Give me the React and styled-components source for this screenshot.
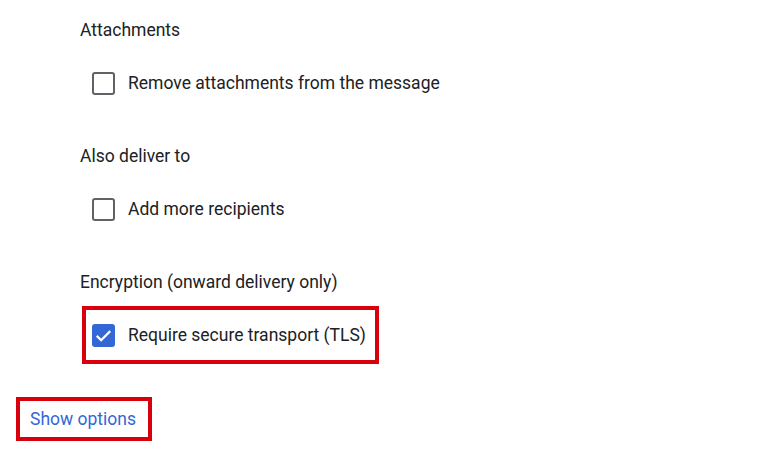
import React from "react";
import styled, { createGlobalStyle } from "styled-components";

const GlobalStyle = createGlobalStyle`
  body {
    margin: 0;
    background: #ffffff;
    font-family: Roboto, "Noto Sans", sans-serif;
    color: #202124;
  }
`;

const Page = styled.div`
  width: 784px;
  height: 453px;
  box-sizing: border-box;
  padding: 18px 0 0 16px;
  display: flex;
  flex-direction: column;
`;

const Settings = styled.div`
  display: flex;
  flex-direction: column;
  padding-left: 64px;
`;

const Section = styled.div`
  display: flex;
  flex-direction: column;
  gap: 12px;
  margin-bottom: 32px;
`;

const Label = styled.div`
  font-size: 17.5px;
  line-height: 24px;
  height: 24px;
`;

const Row = styled.label`
  align-self: flex-start;
  display: flex;
  align-items: center;
  gap: 13px;
  height: 50px;
  margin-left: 2px;
  padding: 0 9px 0 6px;
  border: 4px solid ${(p) => (p.$highlight ? "#d9000d" : "transparent")};
  font-size: 17.5px;
  cursor: pointer;
`;

const Box = styled.span`
  width: 23px;
  height: 23px;
  box-sizing: border-box;
  border-radius: 3px;
  border: ${(p) => (p.$checked ? "none" : "2px solid #5f6368")};
  background: ${(p) => (p.$checked ? "#3367d6" : "#fff")};
  display: flex;
  align-items: center;
  justify-content: center;
`;

const LinkBox = styled.div`
  align-self: flex-start;
  margin-top: 1px;
  border: 4px solid #d9000d;
  height: 36px;
  padding: 0 12px 0 10px;
  display: flex;
  align-items: center;
  font-size: 17.5px;
  color: #3367d6;
`;

const Check = ({ checked }) => (
  <Box $checked={checked}>
    {checked && (
      <svg width="19" height="19" viewBox="0 0 24 24">
        <path d="M3.5 12.5l5.5 5.5L20.5 6.5" fill="none" stroke="#fff" strokeWidth="2.8" />
      </svg>
    )}
  </Box>
);

const sections = [
  { label: "Attachments", option: "Remove attachments from the message" },
  { label: "Also deliver to", option: "Add more recipients" },
  { label: "Encryption (onward delivery only)", option: "Require secure transport (TLS)", checked: true, highlight: true },
];

export default function App() {
  return (
    <>
      <GlobalStyle />
      <Page>
        <Settings>
          {sections.map((s) => (
            <Section key={s.label}>
              <Label>{s.label}</Label>
              <Row $highlight={s.highlight}>
                <Check checked={s.checked} />
                {s.option}
              </Row>
            </Section>
          ))}
        </Settings>
        <LinkBox>Show options</LinkBox>
      </Page>
    </>
  );
}
